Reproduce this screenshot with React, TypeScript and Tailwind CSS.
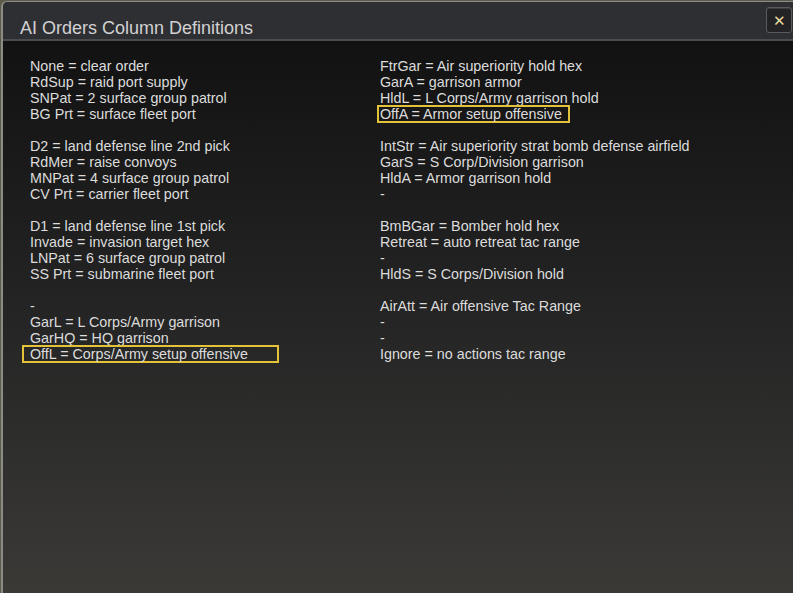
import React from "react";

type Line = { t: string; box?: [number, number] };

const left: Line[][] = [
  [
    { t: "None = clear order" },
    { t: "RdSup = raid port supply" },
    { t: "SNPat = 2 surface group patrol" },
    { t: "BG Prt = surface fleet port" },
  ],
  [
    { t: "D2 = land defense line 2nd pick" },
    { t: "RdMer = raise convoys" },
    { t: "MNPat = 4 surface group patrol" },
    { t: "CV Prt = carrier fleet port" },
  ],
  [
    { t: "D1 = land defense line 1st pick" },
    { t: "Invade = invasion target hex" },
    { t: "LNPat = 6 surface group patrol" },
    { t: "SS Prt = submarine fleet port" },
  ],
  [
    { t: "-" },
    { t: "GarL = L Corps/Army garrison" },
    { t: "GarHQ = HQ garrison" },
    { t: "OffL = Corps/Army setup offensive", box: [-8, 257] },
  ],
];

const right: Line[][] = [
  [
    { t: "FtrGar = Air superiority hold hex" },
    { t: "GarA = garrison armor" },
    { t: "HldL = L Corps/Army garrison hold" },
    { t: "OffA = Armor setup offensive", box: [-3, 193] },
  ],
  [
    { t: "IntStr = Air superiority strat bomb defense airfield" },
    { t: "GarS = S Corp/Division garrison" },
    { t: "HldA = Armor garrison hold" },
    { t: "-" },
  ],
  [
    { t: "BmBGar = Bomber hold hex" },
    { t: "Retreat = auto retreat tac range" },
    { t: "-" },
    { t: "HldS = S Corps/Division hold" },
  ],
  [
    { t: "AirAtt = Air offensive Tac Range" },
    { t: "-" },
    { t: "-" },
    { t: "Ignore = no actions tac range" },
  ],
];

function Column({ groups, className }: { groups: Line[][]; className?: string }) {
  return (
    <div className={"flex flex-col gap-4 " + (className ?? "")}>
      {groups.map((g, i) => (
        <div key={i} className="flex flex-col">
          {g.map((l, j) => (
            <div key={j} className="relative h-4 leading-4 whitespace-nowrap">
              {l.box ? (
                <div
                  className="absolute top-[-1px] h-[18px] border-2 border-[#e3c23a]"
                  style={{ left: l.box[0], width: l.box[1] }}
                />
              ) : null}
              <span className="relative">{l.t}</span>
            </div>
          ))}
        </div>
      ))}
    </div>
  );
}

export default function App() {
  return (
    <div
      className="w-[793px] h-[593px] overflow-hidden bg-[#5d5c4c] pt-[1px] pl-[1px]"
      style={{ fontFamily: '"Liberation Sans", Arial, sans-serif' }}
    >
      <div className="h-[600px] w-[800px] rounded-tl-[6px] rounded-bl-[6px] border-l-2 border-t border-[#8c8c86] flex flex-col overflow-hidden">
        <div className="h-[39px] shrink-0 bg-[#2e2f32] border-b-2 border-[#4b4c4e] flex items-center relative">
          <div className="pl-[17px] pt-[15px] text-[18px] text-[#d2d2d2] leading-none">
            AI Orders Column Definitions
          </div>
          <div className="absolute left-[763px] top-[5px] w-[26px] h-[26px] rounded-[3px] bg-[#232325] border border-[#5a5a5c] shadow-[inset_0_1px_0_#3c3c3e] flex items-center justify-center text-[#eadca0] text-[15px] leading-none">
            ✕
          </div>
        </div>
        <div className="flex-1 bg-gradient-to-b from-[#121212] via-[#252525] to-[#3b3a37] pl-[27px] pt-[17px] flex text-[14.3px] text-[#dcdcdc]">
          <Column groups={left} className="w-[350px]" />
          <Column groups={right} />
        </div>
      </div>
    </div>
  );
}
